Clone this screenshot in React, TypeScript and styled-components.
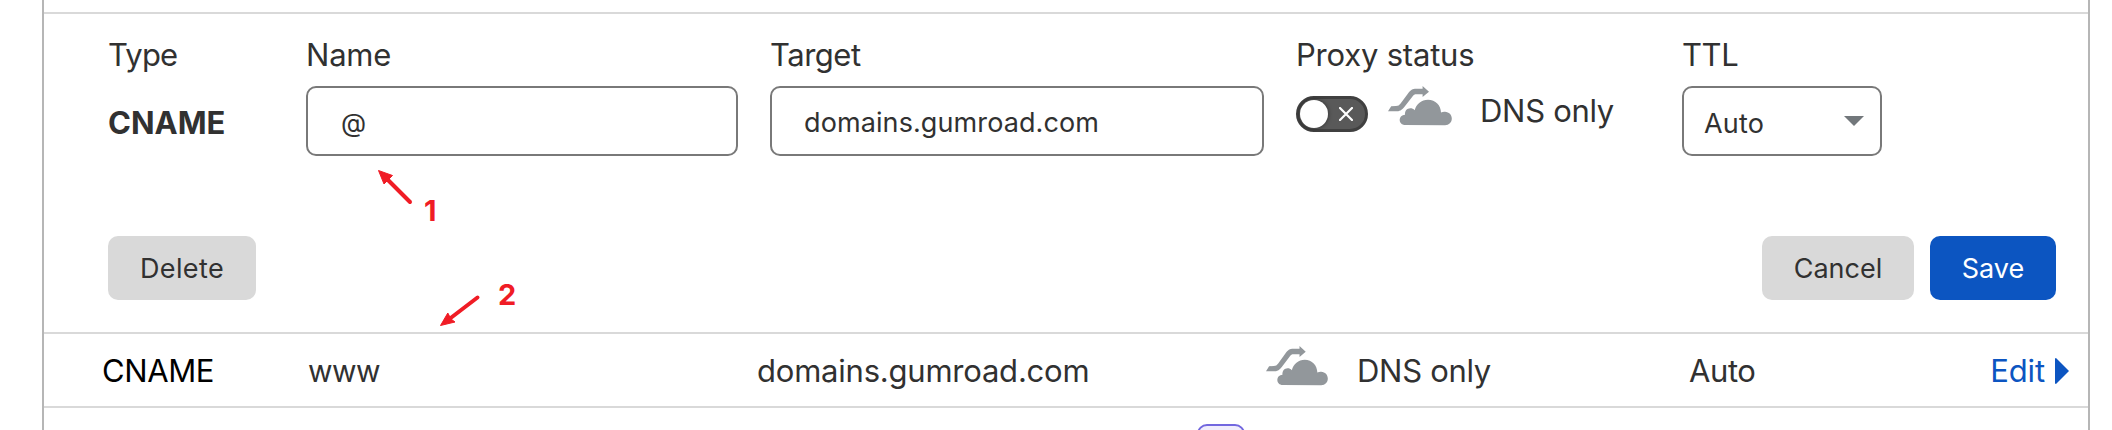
import React from "react";
import styled, { createGlobalStyle } from "styled-components";

const GlobalStyle = createGlobalStyle`
  *, *::before, *::after { box-sizing: border-box; }
  body {
    margin: 0;
    background: #fff;
    color: #313131;
    font-family: Inter, "Liberation Sans", sans-serif;
    font-size: 31px;
    line-height: 38px;
    font-kerning: normal;
  }
`;

const Page = styled.main`
  position: relative;
  height: 430px;
  overflow: hidden;
  padding: 0 22px 0 42px;
`;

const Table = styled.section`
  display: flex;
  flex-direction: column;
  height: 430px;
  overflow: hidden;
  border: solid #b6b6b6;
  border-width: 0 2px;
`;

const Editor = styled.form`
  display: flex;
  flex: none;
  flex-direction: column;
  justify-content: space-between;
  height: 322px;
  margin-top: 12px;
  padding: 22px 32px 32px 64px;
  border: solid #d9d9d9;
  border-width: 2px 0;
`;

const Fields = styled.div`
  display: grid;
  grid-template-columns: 198px 464px 526px 386px 200px;
`;

const Field = styled.div`
  display: flex;
  flex-direction: column;
  gap: 12px;
  align-items: flex-start;
`;

const Text = styled.span<{ $track?: number; $size?: number; $dx?: number; $color?: string }>`
  white-space: nowrap;
  letter-spacing: ${(p) => p.$track ?? 0}px;
  font-size: ${(p) => p.$size ?? 31}px;
  margin-left: ${(p) => p.$dx ?? 0}px;
  color: ${(p) => p.$color ?? "inherit"};
`;

const TypeValue = styled.strong`
  margin-top: 18px;
  font-weight: 700;
`;

const Box = styled.div<{ $width: number; $pad: number; $drop?: number }>`
  display: flex;
  align-items: center;
  justify-content: space-between;
  width: ${(p) => p.$width}px;
  height: 70px;
  padding: ${(p) => p.$drop ?? 3}px 16px 0 ${(p) => p.$pad}px;
  border: 2px solid #797979;
  border-radius: 10px;
  font-size: 27px;
`;

const Caret = styled.svg`
  margin-top: -5px;
`;

const ProxyControl = styled.div`
  display: flex;
  align-items: flex-start;
  height: 50px;
`;

const StatusLabel = styled.span`
  margin: 6px 0 0 28px;
  letter-spacing: -0.3px;
  white-space: nowrap;
`;

const Toggle = styled.div`
  display: flex;
  align-items: center;
  justify-content: space-between;
  width: 72px;
  height: 36px;
  margin: 10px 20px 0 0;
  padding: 0 12px 0 1px;
  border: 3px solid #404040;
  border-radius: 18px;
  background: #595959;
`;

const Knob = styled.span`
  width: 28px;
  height: 28px;
  border-radius: 50%;
  background: #fff;
  box-shadow: 0 0 4px rgba(0, 0, 0, 0.5);
`;

const Actions = styled.div`
  display: flex;
  gap: 16px;
`;

const Button = styled.button<{ $width: number; $primary?: boolean; $push?: boolean }>`
  width: ${(p) => p.$width}px;
  height: 64px;
  margin: 0 ${(p) => (p.$push ? "auto" : "0")} 0 0;
  padding: 2px 0 0;
  border: 0;
  border-radius: 10px;
  background: ${(p) => (p.$primary ? "#0c55c1" : "#d9d9d9")};
  color: ${(p) => (p.$primary ? "#fff" : "#313131")};
  font: 400 27px/62px Inter, "Liberation Sans", sans-serif;
`;

const Row = styled.div`
  display: grid;
  flex: none;
  grid-template-columns: 206px 450px 508px 423px 120px 1fr;
  align-items: center;
  height: 74px;
  padding: 2px 19px 0 58px;
  border-bottom: 2px solid #d9d9d9;
`;

const Status = styled.div`
  display: flex;
  align-items: center;
`;

const EditLink = styled.a`
  display: flex;
  align-items: center;
  justify-content: flex-end;
  gap: 10px;
  color: #0c55c1;
`;

const Badge = styled.span`
  width: 48px;
  height: 40px;
  margin: 16px 0 0 1153px;
  flex: none;
  border: 2px solid #7267df;
  border-radius: 10px;
  background: #f0edfc;
`;

const NoteLayer = styled.svg`
  position: absolute;
  left: 0;
  top: 0;
`;

const NoteNumber = styled.span<{ $x: number; $y: number }>`
  position: absolute;
  left: ${(p) => p.$x}px;
  top: ${(p) => p.$y}px;
  color: #f01c25;
  font-size: 29px;
  font-weight: 700;
  line-height: 36px;
`;

const CloudSvg = styled.svg<{ $up?: number }>`
  display: block;
  flex: none;
  margin-top: ${(p) => -(p.$up ?? 0)}px;
`;

const BypassCloud = ({ up, width = 64 }: { up?: number; width?: number }) => (
  <CloudSvg width={width} height="40" viewBox="0 0 64 40" preserveAspectRatio="none" $up={up}>
    <path
      fill="#92979b"
      d="M0 25.3 L3.2 20.2 L8 20 C10.2 20 11.2 19.2 12.6 17.5 L20 7.5 C22.6 4 24.5 2.7 28.2 2.7 L34.6 2.7 L34.6 0 L41 5.7 L34.6 11 L34.6 8.3 L28.6 8.3 C26.6 8.3 25.7 8.9 24.3 10.7 L16.5 20.7 C13.6 24.3 11.5 25.3 8 25.3 Z"
    />
    <path
      fill="#92979b"
      d="M17.2 39 C13.9 39 11.7 36.8 11.7 34 C11.7 31.1 14 29 17 28.8 C16.6 25.1 19 22.3 22.3 22.3 C24 22.3 25.4 22.9 26.7 24.2 C28.2 18 33.5 13.8 40 13.8 C47.5 13.8 52.9 19.5 53 26.5 C54.4 25.8 55.7 25.6 57 25.7 C61 25.9 63.8 28.8 63.8 32.6 C63.8 36.4 61 39.3 57 39.3 Z"
    />
  </CloudSvg>
);

export default function App() {
  return (
    <>
      <GlobalStyle />
      <Page>
        <Table>
          <Editor>
            <Fields>
              <Field>
                <Text $track={-0.8}>Type</Text>
                <TypeValue>CNAME</TypeValue>
              </Field>
              <Field>
                <Text $track={-0.2}>Name</Text>
                <Box $width={432} $pad={33}>
                  <Text $size={26}>@</Text>
                </Box>
              </Field>
              <Field>
                <Text $track={-0.5}>Target</Text>
                <Box $width={494} $pad={32}>
                  <Text $size={27} $track={0.1}>domains.gumroad.com</Text>
                </Box>
              </Field>
              <Field>
                <Text $track={-0.2}>Proxy status</Text>
                <ProxyControl>
                  <Toggle>
                    <Knob />
                    <svg width="14" height="14" viewBox="0 0 14 14">
                      <path d="M1 1 L13 13 M13 1 L1 13" stroke="#fff" strokeWidth="2.2" strokeLinecap="round" />
                    </svg>
                  </Toggle>
                  <BypassCloud />
                  <StatusLabel>DNS only</StatusLabel>
                </ProxyControl>
              </Field>
              <Field>
                <Text $track={-0.4}>TTL</Text>
                <Box $width={200} $pad={20} $drop={5}>
                  <Text $size={27} $track={0.2}>Auto</Text>
                  <Caret width="20" height="10" viewBox="0 0 20 10">
                    <path d="M0 0 H20 L10 10 Z" fill="#72777b" />
                  </Caret>
                </Box>
              </Field>
            </Fields>
            <Actions>
              <Button type="button" $width={148} $push>
                <Text $size={27} $track={0.4}>Delete</Text>
              </Button>
              <Button type="button" $width={152}>Cancel</Button>
              <Button type="button" $width={126} $primary>Save</Button>
            </Actions>
          </Editor>
          <Row>
            <Text $track={-0.4} $color="#000">CNAME</Text>
            <Text $size={30} $track={-0.6}>www</Text>
            <Text $track={-0.22} $dx={-1}>domains.gumroad.com</Text>
            <Status>
              <BypassCloud up={10} width={62} />
              <Text $track={-0.3} $dx={29}>DNS only</Text>
            </Status>
            <Text $track={-0.4}>Auto</Text>
            <EditLink>
              <Text $track={-0.1}>Edit</Text>
              <svg width="14" height="26" viewBox="0 0 14 26">
                <path d="M0 1 Q0 0 1 0 L14 13 L1 26 Q0 26 0 25 Z" fill="#0c55c1" />
              </svg>
            </EditLink>
          </Row>
          <Badge />
        </Table>
        <NoteLayer width="560" height="340" viewBox="0 0 560 340">
          <g fill="#f01c25" stroke="#f01c25" strokeLinejoin="round">
            <path d="M387 179 L410 202" strokeWidth="4" strokeLinecap="round" />
            <path d="M378.5 170.5 L392.5 175.5 L388 180 L384 184 Z" strokeWidth="1" />
            <path d="M450 318.5 L477.5 297.5" strokeWidth="4" strokeLinecap="round" />
            <path d="M440.5 325.5 L447.8 313 L451 319 L455 322 Z" strokeWidth="1" />
          </g>
        </NoteLayer>
        <NoteNumber $x={424} $y={193}>1</NoteNumber>
        <NoteNumber $x={498} $y={277}>2</NoteNumber>
      </Page>
    </>
  );
}
